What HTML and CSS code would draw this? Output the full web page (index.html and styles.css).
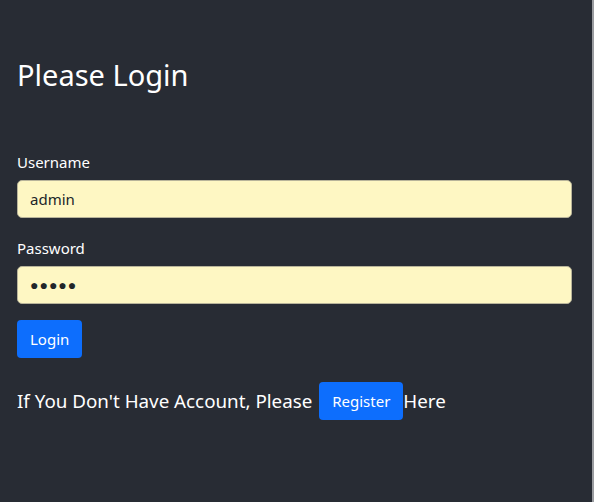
FILE: index.html
```html
<!DOCTYPE html>
<html>
<head>
<meta charset="utf-8">
<link rel="stylesheet" href="styles.css">
</head>
<body>
<div class="page">
  <div class="container">
    <h1 class="title">Please Login</h1>
    <form class="form">
      <div class="field">
        <label class="label">Username</label>
        <div class="input">admin</div>
      </div>
      <div class="field field-last">
        <label class="label">Password</label>
        <div class="input dots">●●●●●</div>
      </div>
      <div class="btn">Login</div>
    </form>
    <p class="register">If You Don't Have Account, Please <span class="btn btn-reg">Register</span>Here</p>
  </div>
</div>
</body>
</html>
```
FILE: styles.css
```css
html, body {
  margin: 0;
  padding: 0;
  height: 100%;
}
body {
  background: #282c34;
  font-family: "Noto Sans", sans-serif;
  color: #fff;
}
.page {
  height: 100%;
  box-sizing: border-box;
  border-right: 2px solid #9a9ca0;
}
.container {
  padding: 56px 0 0 17px;
  width: 555px;
}
.title {
  margin: 0 0 57px 0;
  font-size: 29px;
  font-weight: 400;
  line-height: 37px;
}
.field {
  margin-bottom: 18px;
}
.field-last {
  margin-bottom: 16px;
}
.label {
  display: block;
  font-size: 15px;
  line-height: 24px;
  margin-bottom: 6px;
}
.input {
  box-sizing: border-box;
  height: 38px;
  background: #fef7c3;
  border: 1px solid #b8b49a;
  border-radius: 5px;
  color: #212529;
  font-size: 15px;
  line-height: 36px;
  padding: 0 12px;
}
.dots {
  font-size: 14px;
  letter-spacing: 1px;
}
.btn {
  display: inline-block;
  box-sizing: border-box;
  height: 38px;
  line-height: 38px;
  padding: 0 13px;
  background: #0d6efd;
  color: #fff;
  border-radius: 4px;
  font-size: 15px;
}
.register {
  margin: 24px 0 0 0;
  font-size: 18.8px;
  line-height: 38px;
}
.btn-reg {
  vertical-align: top;
  margin: 0 0 0 2px;
}
```
